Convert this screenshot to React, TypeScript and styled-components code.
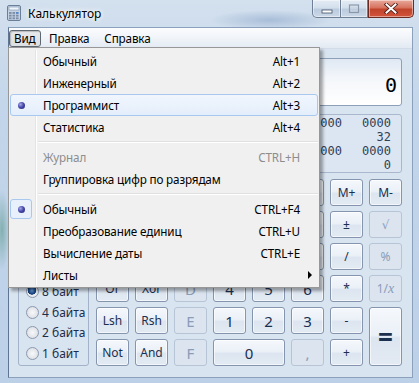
import React from 'react';
import styled, { createGlobalStyle } from 'styled-components';

const GlobalStyle = createGlobalStyle`
  html, body {
    margin: 0;
    padding: 0;
    background: #c8d8eb;
  }
  body {
    width: 419px;
    height: 383px;
    overflow: hidden;
    font-family: 'Noto Sans', 'DejaVu Sans', sans-serif;
  }
`;

const Window = styled.div`
  position: relative;
  width: 419px;
  height: 383px;
  display: flex;
  flex-direction: column;
  background:
    radial-gradient(ellipse 60px 10px at 270px 20px, rgba(120, 150, 190, 0.45), transparent),
    radial-gradient(ellipse 8px 40px at 2px 230px, rgba(70, 140, 120, 0.5), transparent),
    linear-gradient(180deg, #d3e0ee 0%, #c2d5ea 30%, #bcd0e8 100%);
  box-sizing: border-box;
`;

const TitleBar = styled.div`
  height: 28px;
  display: flex;
  align-items: flex-start;
  padding: 0 5px 0 6px;
  flex-shrink: 0;
`;

const TitleText = styled.span`
  margin: 5px 0 0 6px;
  font-size: 12px;
  color: #000;
  text-shadow: 0 0 6px #fff, 0 0 4px #fff;
`;

const Controls = styled.div`
  margin-left: auto;
  display: flex;
`;

const CtrlBtn = styled.div<{ $w: number; $close?: boolean; $first?: boolean }>`
  width: ${(p) => p.$w}px;
  height: 18px;
  box-sizing: border-box;
  display: flex;
  align-items: center;
  justify-content: center;
  border: 1px solid ${(p) => (p.$close ? '#6b2a22' : '#6f7f96')};
  border-top: none;
  border-left-width: ${(p) => (p.$first || p.$close ? 1 : 0)}px;
  border-radius: ${(p) => (p.$first ? '0 0 0 5px' : p.$close ? '0 0 5px 0' : '0')};
  background: ${(p) =>
    p.$close
      ? 'linear-gradient(180deg, #e9a99b 0%, #d6735f 45%, #c0432c 55%, #d3543b 100%)'
      : 'linear-gradient(180deg, #e4ecf5 0%, #d3dfec 45%, #bccbde 55%, #cbd8e7 100%)'};
  box-shadow: inset 0 0 0 1px rgba(255, 255, 255, 0.45);
`;

const Client = styled.div`
  flex: 1;
  margin: -1px 6px 5px 8px;
  display: flex;
  flex-direction: column;
  border: 1px solid #8aa0bb;
  border-left-color: #5f7591;
  box-sizing: border-box;
  background: #d9e4f1;
`;

const MenuBar = styled.div`
  height: 20px;
  display: flex;
  align-items: center;
  background: linear-gradient(180deg, #fbfcfe 0%, #eef2f8 60%, #e3eaf3 100%);
  border-bottom: 1px solid #d2dbe7;
  font-size: 11.7px;
  letter-spacing: -0.15px;
  color: #000;
`;

const MenuTitle = styled.div<{ $open?: boolean }>`
  height: 17px;
  display: flex;
  align-items: center;
  padding: 0 ${(p) => (p.$open ? 6 : 7)}px 0 ${(p) => (p.$open ? 4 : 7)}px;
  margin-right: 1px;
  border-radius: 3px;
  box-sizing: border-box;
  ${(p) =>
    p.$open &&
    `
    width: 32px;
    border: 1px solid #5f6770;
    background: linear-gradient(180deg, #e6e8eb, #dcdfe3);
    box-shadow: inset 1px 1px 1px rgba(0,0,0,0.2);
  `}
`;

const Body = styled.div`
  flex: 1;
  display: flex;
  flex-direction: column;
  padding: 9px 10px 0 9px;
`;

const Display = styled.div`
  height: 48px;
  border: 1px solid #8e9fb8;
  border-radius: 3px;
  box-sizing: border-box;
  background: linear-gradient(180deg, #dfe8f3 0%, #f3f6fa 40%, #ffffff 100%);
  display: flex;
  align-items: flex-end;
  justify-content: flex-end;
  padding: 0 4px 8px 0;
  font-family: 'DejaVu Sans Mono', monospace;
  font-size: 20px;
  color: #000;
`;

const HexPanel = styled.div`
  margin-top: 8px;
  height: 59px;
  border: 1px solid #a9b8cd;
  border-radius: 3px;
  box-sizing: border-box;
  background: #dce6f2;
  padding: 1px 10px 0 0;
  display: grid;
  grid-template-columns: repeat(8, 29px);
  column-gap: 20px;
  justify-content: end;
  grid-auto-rows: 14px;
  font-family: 'DejaVu Sans Mono', monospace;
  font-size: 12px;
  line-height: 14px;
  color: #2f3f57;
`;

const HexCell = styled.span`
  text-align: right;
`;

const Keypad = styled.div`
  margin-top: 6px;
  display: flex;
  gap: 7px;
`;

const Groups = styled.div`
  width: 72px;
  display: flex;
  flex-direction: column;
  gap: 5px;
`;

const GroupBox = styled.div<{ $h: number }>`
  height: ${(p) => p.$h}px;
  border: 1px solid #a2b2c8;
  border-radius: 3px;
  box-sizing: border-box;
  padding: 13px 0 0 7px;
  display: flex;
  flex-direction: column;
  gap: 7.5px;
`;

const RadioRow = styled.div`
  display: flex;
  align-items: center;
  gap: 3px;
  height: 13px;
  font-size: 12px;
  color: #1e2e48;
  white-space: nowrap;
`;

const RadioDot = styled.span<{ $on?: boolean }>`
  width: 13px;
  height: 13px;
  border-radius: 50%;
  box-sizing: border-box;
  border: 1px solid #8c99ad;
  background: ${(p) =>
    p.$on
      ? 'radial-gradient(circle at 45% 40%, #6fa0d8 0, #1f4f8f 3px, #163a6c 4px, #eef1f5 4.5px, #d4d9e0 100%)'
      : 'radial-gradient(circle at 50% 50%, #f7f8fa 0, #e2e5ea 60%, #cfd4db 100%)'};
`;

const Keys = styled.div`
  display: grid;
  grid-template-columns: repeat(8, 33px);
  grid-auto-rows: 27px;
  gap: 5px 6px;
`;

const Key = styled.div<{ $off?: boolean; $big?: boolean; $col?: number; $row?: number }>`
  grid-column: span ${(p) => p.$col || 1};
  grid-row: span ${(p) => p.$row || 1};
  border: 1px solid ${(p) => (p.$off ? '#b7c4d6' : '#8595ad')};
  border-radius: 3px;
  box-sizing: border-box;
  display: flex;
  align-items: center;
  justify-content: center;
  font-size: ${(p) => (p.$big ? 15 : 12)}px;
  color: ${(p) => (p.$off ? '#8a9cb8' : '#1b2f4f')};
  background: ${(p) =>
    p.$off
      ? '#dbe4ef'
      : 'linear-gradient(180deg, #f5f8fc 0%, #eaf0f7 48%, #dce5f0 52%, #e3eaf3 100%)'};
  box-shadow: ${(p) => (p.$off ? 'none' : 'inset 0 0 0 1px rgba(255,255,255,0.6)')};
`;

const EqualSign = styled.span`
  font-size: 26px;
  font-weight: bold;
  color: #1b2f4f;
  line-height: 1;
`;

const Ital = styled.i`
  font-family: 'Liberation Serif', serif;
  font-size: 14px;
`;

const Menu = styled.div`
  position: absolute;
  left: 8px;
  top: 47px;
  width: 312px;
  box-sizing: border-box;
  border: 1px solid #979797;
  background: #f0f0f0;
  padding: 2px 1px 1px;
  box-shadow: 3px 3px 3px rgba(0, 0, 0, 0.35);
  font-size: 11.7px;
  letter-spacing: -0.15px;
  color: #000;

  &::before {
    content: '';
    position: absolute;
    top: 2px;
    bottom: 2px;
    left: 26px;
    width: 1px;
    background: #e2e3e3;
  }
  &::after {
    content: '';
    position: absolute;
    top: 2px;
    bottom: 2px;
    left: 27px;
    width: 1px;
    background: #ffffff;
  }
`;

const Item = styled.div<{ $hot?: boolean; $gray?: boolean }>`
  position: relative;
  z-index: 1;
  height: 22px;
  display: grid;
  grid-template-columns: 26px 1fr auto 17px;
  align-items: center;
  box-sizing: border-box;
  border: 1px solid ${(p) => (p.$hot ? '#a8c8ef' : 'transparent')};
  border-radius: 3px;
  background: ${(p) => (p.$hot ? 'linear-gradient(180deg, #f1f6fd 0%, #e4eefb 100%)' : 'transparent')};
  color: ${(p) => (p.$gray ? '#8d8d8d' : '#000')};
`;

const Gutter = styled.span<{ $boxed?: boolean }>`
  width: 22px;
  height: 20px;
  display: flex;
  align-items: center;
  justify-content: center;
  box-sizing: border-box;
  border-radius: 3px;
  border: 1px solid ${(p) => (p.$boxed ? '#a8c8ef' : 'transparent')};
  background: ${(p) => (p.$boxed ? '#e8f0fb' : 'transparent')};
  margin-left: -1px;
`;

const Bullet = styled.span`
  width: 7px;
  height: 7px;
  border-radius: 50%;
  background: radial-gradient(circle at 35% 35%, #a7a9e6 0, #4a4cae 45%, #1d1f6e 100%);
`;

const Label = styled.span`
  padding-left: 6px;
  white-space: nowrap;
`;

const Shortcut = styled.span`
  text-align: right;
  white-space: nowrap;
`;

const Arrow = styled.span`
  justify-self: center;
  width: 0;
  height: 0;
  border-top: 4px solid transparent;
  border-bottom: 4px solid transparent;
  border-left: 4px solid #000;
  margin-left: 2px;
`;

const Separator = styled.div`
  position: relative;
  z-index: 1;
  height: 8px;
  margin-left: 28px;
  display: flex;
  flex-direction: column;
  justify-content: center;

  &::before {
    content: '';
    height: 1px;
    background: #e0e0e0;
  }
  &::after {
    content: '';
    height: 1px;
    background: #ffffff;
  }
`;

const CalcIcon = () => (
  <svg width="16" height="16" viewBox="0 0 16 16" style={{ marginTop: 5 }}>
    <rect x="1.5" y="0.5" width="13" height="15" rx="1.5" fill="#c5d3e4" stroke="#6c7f98" />
    <rect x="3" y="2" width="10" height="3" fill="#eef5fb" stroke="#7f93ad" strokeWidth="0.6" />
    {[0, 1, 2].map((r) =>
      [0, 1, 2].map((c) => (
        <rect key={`${r}-${c}`} x={3 + c * 3.5} y={7 + r * 2.7} width="2.6" height="1.9" fill={c === 2 && r === 0 ? '#5a86c4' : '#7d8ea6'} />
      ))
    )}
  </svg>
);

const MinGlyph = () => (
  <svg width="12" height="6" viewBox="0 0 12 6" style={{ marginTop: 6 }}>
    <rect x="1" y="1" width="10" height="3" fill="#fff" stroke="#445066" strokeWidth="0.8" />
  </svg>
);

const MaxGlyph = () => (
  <svg width="12" height="10" viewBox="0 0 12 10">
    <rect x="1.5" y="1" width="9" height="7.5" fill="none" stroke="#8b98ab" strokeWidth="1.2" />
    <rect x="3.2" y="3.2" width="5.6" height="3.5" fill="none" stroke="#c9d2de" strokeWidth="0.8" />
  </svg>
);

const CloseGlyph = () => (
  <svg width="14" height="11" viewBox="0 0 14 11">
    <path d="M2.5 1.5 L11.5 9.5 M11.5 1.5 L2.5 9.5" stroke="#4a1a14" strokeWidth="3.6" strokeLinecap="square" />
    <path d="M2.5 1.5 L11.5 9.5 M11.5 1.5 L2.5 9.5" stroke="#ffffff" strokeWidth="2" strokeLinecap="square" />
  </svg>
);

type KeyDef = { t: React.ReactNode; off?: boolean; big?: boolean; col?: number; row?: number };

// keys fully covered by the open menu carry no label (t: '')
const keys: KeyDef[] = [
  { t: '' }, { t: '' }, { t: '', off: true }, { t: '' }, { t: '' }, { t: '' }, { t: 'M+' }, { t: 'M-' },
  { t: '' }, { t: '' }, { t: '', off: true }, { t: '' }, { t: '' }, { t: '' }, { t: '±' }, { t: '√', off: true },
  { t: '' }, { t: '' }, { t: '', off: true }, { t: '' }, { t: '' }, { t: '' }, { t: '/' }, { t: '%', off: true },
  { t: 'Or' }, { t: 'Xor' }, { t: 'D', off: true, big: true }, { t: '4', big: true }, { t: '5', big: true }, { t: '6', big: true }, { t: '*' }, { t: <>1/<Ital>x</Ital></>, off: true },
  { t: 'Lsh' }, { t: 'Rsh' }, { t: 'E', off: true, big: true }, { t: '1', big: true }, { t: '2', big: true }, { t: '3', big: true }, { t: '-' }, { t: <EqualSign>=</EqualSign>, row: 2 },
  { t: 'Not' }, { t: 'And' }, { t: 'F', off: true, big: true }, { t: '0', big: true, col: 2 }, { t: ',', off: true, big: true }, { t: '+' },
];

const hexRows = [
  ['', '', '', '', '', '', '0000', '0000'],
  ['', '', '', '', '', '', '', '32'],
  ['', '', '', '', '', '', '0000', '0000'],
  ['', '', '', '', '', '', '', '0'],
];

type MenuDef =
  | { sep: true }
  | { label: string; key?: string; dot?: boolean; boxed?: boolean; hot?: boolean; gray?: boolean; sub?: boolean };

const menuItems: MenuDef[] = [
  { label: 'Обычный', key: 'Alt+1' },
  { label: 'Инженерный', key: 'Alt+2' },
  { label: 'Программист', key: 'Alt+3', dot: true, hot: true },
  { label: 'Статистика', key: 'Alt+4' },
  { sep: true },
  { label: 'Журнал', key: 'CTRL+H', gray: true },
  { label: 'Группировка цифр по разрядам' },
  { sep: true },
  { label: 'Обычный', key: 'CTRL+F4', dot: true, boxed: true },
  { label: 'Преобразование единиц', key: 'CTRL+U' },
  { label: 'Вычисление даты', key: 'CTRL+E' },
  { label: 'Листы', sub: true },
];

export default function App() {
  return (
    <>
      <GlobalStyle />
      <Window>
        <TitleBar>
          <CalcIcon />
          <TitleText>Калькулятор</TitleText>
          <Controls>
            <CtrlBtn $w={29} $first>
              <MinGlyph />
            </CtrlBtn>
            <CtrlBtn $w={27}>
              <MaxGlyph />
            </CtrlBtn>
            <CtrlBtn $w={46} $close>
              <CloseGlyph />
            </CtrlBtn>
          </Controls>
        </TitleBar>
        <Client>
          <MenuBar>
            <MenuTitle $open>Вид</MenuTitle>
            <MenuTitle>Правка</MenuTitle>
            <MenuTitle>Справка</MenuTitle>
          </MenuBar>
          <Body>
            <Display>0</Display>
            <HexPanel>
              {hexRows.flatMap((row, r) => row.map((v, c) => <HexCell key={`${r}-${c}`}>{v}</HexCell>))}
            </HexPanel>
            <Keypad>
              <Groups>
                <GroupBox $h={87}>
                  <RadioRow><RadioDot /></RadioRow>
                  <RadioRow><RadioDot $on /></RadioRow>
                  <RadioRow><RadioDot /></RadioRow>
                  <RadioRow><RadioDot /></RadioRow>
                </GroupBox>
                <GroupBox $h={95}>
                  <RadioRow><RadioDot $on />8 байт</RadioRow>
                  <RadioRow><RadioDot />4 байта</RadioRow>
                  <RadioRow><RadioDot />2 байта</RadioRow>
                  <RadioRow><RadioDot />1 байт</RadioRow>
                </GroupBox>
              </Groups>
              <Keys>
                {keys.map((k, i) => (
                  <Key key={i} $off={k.off} $big={k.big} $col={k.col} $row={k.row}>
                    {k.t}
                  </Key>
                ))}
              </Keys>
            </Keypad>
          </Body>
        </Client>
        <Menu>
          {menuItems.map((m, i) =>
            'sep' in m ? (
              <Separator key={i} />
            ) : (
              <Item key={i} $hot={m.hot} $gray={m.gray}>
                <Gutter $boxed={m.boxed}>{m.dot && <Bullet />}</Gutter>
                <Label>{m.label}</Label>
                <Shortcut>{m.key}</Shortcut>
                {m.sub ? <Arrow /> : <span />}
              </Item>
            )
          )}
        </Menu>
      </Window>
    </>
  );
}
